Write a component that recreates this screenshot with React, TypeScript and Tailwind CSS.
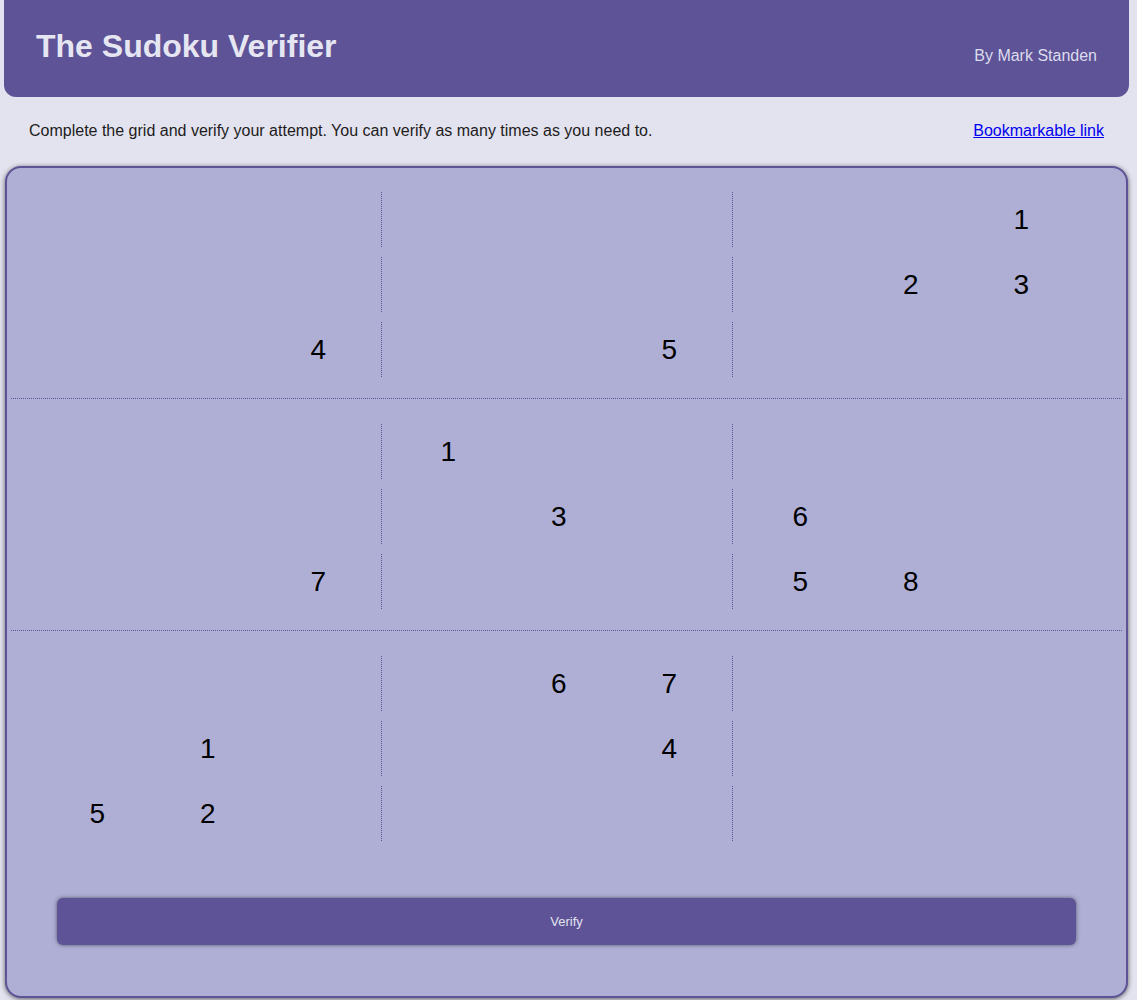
const board: (number | null)[][] = [
  [null, null, null, null, null, null, null, null, 1],
  [null, null, null, null, null, null, null, 2, 3],
  [null, null, 4, null, null, 5, null, null, null],
  [null, null, null, 1, null, null, null, null, null],
  [null, null, null, null, 3, null, 6, null, null],
  [null, null, 7, null, null, null, 5, 8, null],
  [null, null, null, null, 6, 7, null, null, null],
  [null, 1, null, null, null, 4, null, null, null],
  [5, 2, null, null, null, null, null, null, null],
];

function Cell({ value }: { value: number | null }) {
  return (
    <div className="w-[110.5px] h-[55px] text-center text-[28px] leading-[55px] text-black">
      {value ?? ""}
    </div>
  );
}

function Row({ values }: { values: (number | null)[] }) {
  return (
    <div className="flex h-[55px]">
      <div className="flex w-[371px] pl-[31px] border-r border-dotted border-[#5d5396]">
        {values.slice(0, 3).map((v, i) => (
          <Cell key={i} value={v} />
        ))}
      </div>
      <div className="flex w-[351px] pl-[11px] border-r border-dotted border-[#5d5396]">
        {values.slice(3, 6).map((v, i) => (
          <Cell key={i} value={v} />
        ))}
      </div>
      <div className="flex pl-[12px]">
        {values.slice(6, 9).map((v, i) => (
          <Cell key={i} value={v} />
        ))}
      </div>
    </div>
  );
}

function Block({ rows }: { rows: (number | null)[][] }) {
  return (
    <div className="flex flex-col gap-[10px]">
      {rows.map((r, i) => (
        <Row key={i} values={r} />
      ))}
    </div>
  );
}

export default function App() {
  return (
    <div
      className="min-h-screen bg-[#e3e3ef] pl-[4px] pr-[8px] pb-[3px]"
      style={{ fontFamily: '"Liberation Sans", Arial, sans-serif' }}
    >
      <header className="flex h-[97px] items-start justify-between rounded-b-[12px] bg-[#5d5396] px-[32px]">
        <h1 className="mt-[28px] text-[32px] font-bold leading-[37px] text-[#e6e6f2]">
          The Sudoku Verifier
        </h1>
        <p className="mt-[47px] text-[16px] leading-[18px] text-[#dcdcee]">By Mark Standen</p>
      </header>

      <div className="flex justify-between px-[25px] pt-[25px] pb-[26px] text-[16px] leading-[18px]">
        <p className="text-[#221c1c]">
          Complete the grid and verify your attempt. You can verify as many times as you need to.
        </p>
        <a href="#" className="text-[#0000ee] underline">
          Bookmarkable link
        </a>
      </div>

      <div className="mx-px rounded-[16px] border-2 border-[#5d5396] bg-[#afafd6] px-[4px] pt-[24px] pb-[51px] shadow-[0_1px_5px_rgba(0,0,0,0.6)]">
        <Block rows={board.slice(0, 3)} />
        <div className="mt-[21px] mb-[25px] border-t border-dotted border-[#5d5396]" />
        <Block rows={board.slice(3, 6)} />
        <div className="mt-[21px] mb-[25px] border-t border-dotted border-[#5d5396]" />
        <Block rows={board.slice(6, 9)} />
        <div className="mt-[57px] px-[46px]">
          <button className="h-[47px] w-full rounded-[6px] bg-[#5d5396] text-[13px] text-[#e3e3f0] shadow-[0_0_4px_rgba(0,0,0,0.5)]">
            Verify
          </button>
        </div>
      </div>
    </div>
  );
}
